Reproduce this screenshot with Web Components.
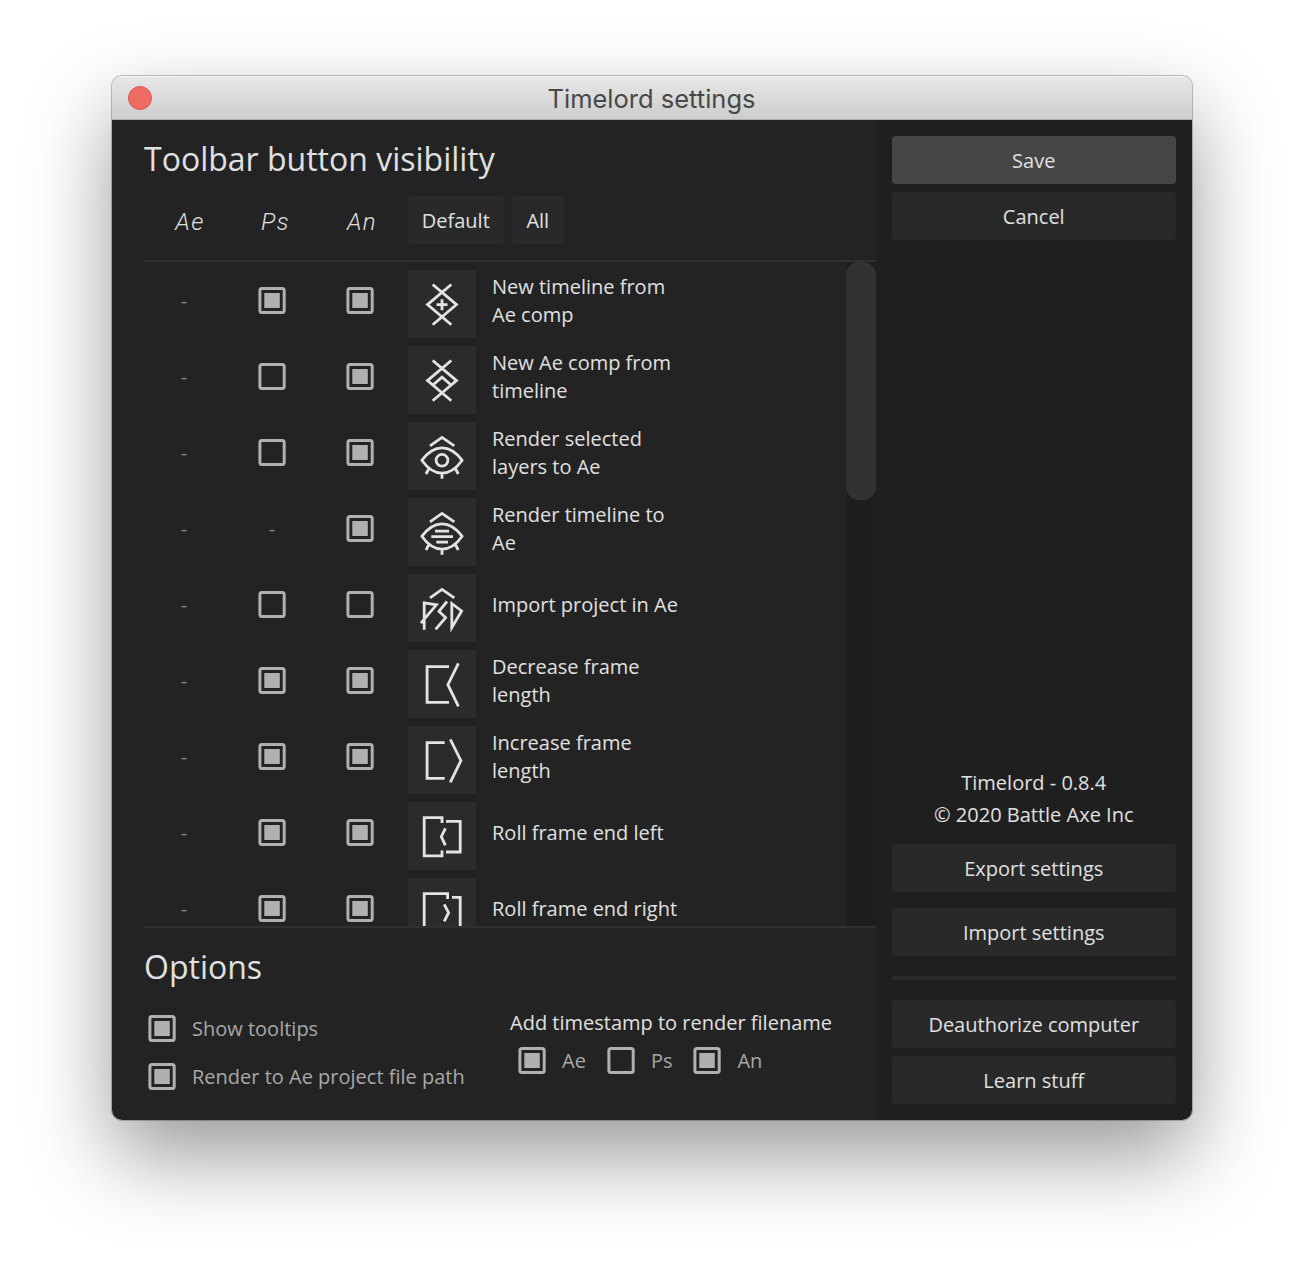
<!DOCTYPE html>
<html lang="en">
<head>
<meta charset="utf-8">
<title>Timelord settings</title>
<style>
body{margin:0;background:#fff;width:1304px;height:1268px;overflow:hidden;font:20px/28px "Open Sans","Noto Sans",sans-serif;color:#e0e0e0}
</style>
</head>
<body>
<settings-window></settings-window>
<script>
const define = (name, html) => customElements.define(name, class extends HTMLElement {
  connectedCallback() {
    if (this.shadowRoot) return;
    const root = this.attachShadow({ mode: 'open' });
    root.innerHTML = typeof html === 'function' ? html(this) : html;
  }
});

const chevron = '<path d="M22 23.8L34 15.4L46.3 23.8"/>';
const eye = chevron + '<path d="M13.8 38.3C20 30 27 25.8 34 25.8S48 30 54.2 38.3C48 47 41 51.2 34 51.2S20 47 13.8 38.3ZM34 51.5V56.7M20.7 47L18 52M47.6 47L50.3 52" stroke-linejoin="round"/>';
const cross = '<path d="M24.7 14.5L48.5 34.6L24.7 54.7M43.3 14.5L19.5 34.6L43.3 54.7"/>';
const icons = {
  'new-timeline': cross + '<path d="M34 29.2V40.2M28.5 34.7H39.5"/>',
  'new-comp': cross + '<path d="M24.6 39.2L34 31.2L43.4 39.2"/>',
  'render-layers': eye + '<circle cx="34" cy="38.3" r="5.9"/>',
  'render-timeline': eye + '<path d="M27 33.2H41M23.3 38.7H45M28.3 44.2H40"/>',
  'import': chevron + '<path d="M16.2 55.7V28.8L28.4 30.8L12.9 49.2M39 27.5L31 37.4L37.6 43.6L27.6 55.4M43.8 29.5L53.6 37L43.8 53.6Z"/>',
  'decrease': '<path d="M41 16.7H19.1V52.4H41M50.4 13.3L39.9 34.7L50.4 56.3"/>',
  'increase': '<path d="M36.7 16.7H19.1V52.4H36.7M42.3 13.3L52.9 34.7L42.3 56.3"/>',
  'roll-left': '<path d="M34 21V15.6H16.2V53.9H34V48.4M38 19.4H52.2V50H38M37.4 26.3L33.3 34.7L37.4 43.3"/>',
  'roll-right': '<path d="M39.6 21V15.6H16.2V53.9H39.6V48.4M44 19.4H52.2V50H44M36.2 26.3L40.6 34.7L36.2 43.3"/>'
};

define('tl-icon', el => `<style>
:host{display:block;width:68px;height:68px;background:#2b2b2b}
svg{display:block;fill:none;stroke:#e3e3e3;stroke-width:2.8}
</style><svg width="68" height="68" viewBox="0 0 68 68">${icons[el.getAttribute('name')]}</svg>`);

define('tl-check', el => `<style>
:host{display:block;width:28px;height:27px;flex:none}
svg{display:block}
</style><svg width="28" height="27" viewBox="0 0 28 27"><rect x="1.9" y="1.5" width="24.3" height="24" rx="2" fill="none" stroke="#b0b0b0" stroke-width="3"/>${el.hasAttribute('checked') ? '<rect x="6.3" y="6" width="15.5" height="15" fill="#b0b0b0"/>' : ''}</svg>`);

define('tl-button', `<style>
:host{display:flex;height:48px;align-items:center;justify-content:center;background:#292929;border-radius:4px;line-height:28px;box-sizing:border-box;padding:2px .5px 0 0}
:host([primary]){background:#464646}
</style><slot></slot>`);

define('tl-option', el => `<style>
:host{display:flex;align-items:center;gap:16px;color:#a8a8a8}
span{line-height:28px;padding-top:1px}
</style><tl-check ${el.hasAttribute('checked') ? 'checked' : ''}></tl-check><span><slot></slot></span>`);

const cell = v => v === '-' ? '<i>-</i>' : `<tl-check ${v === '1' ? 'checked' : ''}></tl-check>`;
define('tl-row', el => `<style>
:host{display:grid;grid-template-columns:80px 96px 80px 68px 192px;height:76px;align-items:center;justify-items:center}
i{font-style:normal;color:#858585;padding-top:1px}
tl-icon{align-self:end;margin-left:16px}
p{margin:0;justify-self:start;padding:1px 0 0 24px;width:192px}
tl-check{margin-top:1px}
</style>${[...el.getAttribute('states')].map(cell).join('')}<tl-icon name="${el.getAttribute('icon')}"></tl-icon><p><slot></slot></p>`);

define('tl-scrollbar', `<style>
:host{display:block;width:30px;background:#1e1e1e}
div{height:238px;border-radius:13px;background:#323232}
</style><div></div>`);

define('title-bar', `<style>
:host{display:grid;grid-template-columns:56px 1fr 56px;height:44px;align-items:center;box-sizing:border-box;background:linear-gradient(#e7e7e7,#cdcdcd);border-top:1px solid #f4f4f4;border-bottom:1px solid #adadad;color:#484848;font:400 25.5px/30px Inter,sans-serif;text-align:center}
b{width:24px;height:24px;border-radius:50%;box-sizing:border-box;background:#ed6b60;border:1px solid #dc5a50;margin-left:16px}
span{padding:2px 1px 0 0}
</style><b></b><span><slot></slot></span>`);

define('tool-list', `<style>
:host{display:flex;height:664px;overflow:hidden;border:solid #303030;border-width:2px 0}
section{flex:1;height:664px;overflow:hidden}
</style><section>
<tl-row states="-11" icon="new-timeline">New timeline from Ae comp</tl-row>
<tl-row states="-01" icon="new-comp">New Ae comp from timeline</tl-row>
<tl-row states="-01" icon="render-layers">Render selected layers to Ae</tl-row>
<tl-row states="--1" icon="render-timeline">Render timeline to Ae</tl-row>
<tl-row states="-00" icon="import">Import project in Ae</tl-row>
<tl-row states="-11" icon="decrease">Decrease frame length</tl-row>
<tl-row states="-11" icon="increase">Increase frame length</tl-row>
<tl-row states="-11" icon="roll-left">Roll frame end left</tl-row>
<tl-row states="-11" icon="roll-right">Roll frame end right</tl-row>
</section><tl-scrollbar></tl-scrollbar>`);

define('main-panel', `<style>
:host{display:flex;flex-direction:column;width:764px;box-sizing:border-box;padding-left:32px;background:#232323}
h2{margin:0;font-weight:400;font-size:32px;line-height:44px;padding-top:17px}
.head{display:grid;grid-template-columns:91px 80px 93px 96px 52px;height:48px;margin:15px 0 16px;align-items:center}
.head span{text-align:center;font:italic 300 24px/28px Roboto,sans-serif;letter-spacing:1.4px;padding:4px 0 0 1px}
.head tl-button:last-child{margin-left:8px;width:52px}
.opts{display:flex;padding:20px 0 0 4px}
.left{display:flex;flex-direction:column;gap:19px;width:362px;padding-top:5px}
.right p{margin:0 0 9px}
.right div{display:flex;padding-left:8px;gap:21px}
</style>
<h2>Toolbar button visibility</h2>
<div class="head"><span>Ae</span><span>Ps</span><span>An</span><tl-button>Default</tl-button><tl-button>All</tl-button></div>
<tool-list></tool-list>
<h2>Options</h2>
<div class="opts"><div class="left"><tl-option checked>Show tooltips</tl-option><tl-option checked>Render to Ae project file path</tl-option></div>
<div class="right"><p>Add timestamp to render filename</p><div><tl-option checked>Ae</tl-option><tl-option>Ps</tl-option><tl-option checked>An</tl-option></div></div></div>`);

define('side-panel', `<style>
:host{display:flex;flex-direction:column;flex:1;box-sizing:border-box;padding:16px;background:#1f1f1f}
tl-button+tl-button{margin-top:8px}
.info{margin-top:auto;text-align:center;line-height:32px;padding:0 .5px 13px 0}
tl-button.wide{margin-top:16px}
hr{width:100%;height:4px;border:0;margin:20px 0;background:#2b2b2b}
</style>
<tl-button primary>Save</tl-button><tl-button>Cancel</tl-button>
<div class="info">Timelord - 0.8.4<br>© 2020 Battle Axe Inc</div>
<tl-button>Export settings</tl-button><tl-button class="wide">Import settings</tl-button>
<hr>
<tl-button>Deauthorize computer</tl-button><tl-button>Learn stuff</tl-button>`);

define('settings-window', `<style>
:host{display:block;width:1080px;margin:76px 0 0 112px;border-radius:10px;overflow:hidden;box-shadow:0 0 0 1px rgba(0,0,0,.2),0 0 2px rgba(0,0,0,.15),0 36px 84px rgba(0,0,0,.4)}
main{display:flex;height:1000px}
</style><title-bar>Timelord settings</title-bar><main><main-panel></main-panel><side-panel></side-panel></main>`);
</script>
</body>
</html>
